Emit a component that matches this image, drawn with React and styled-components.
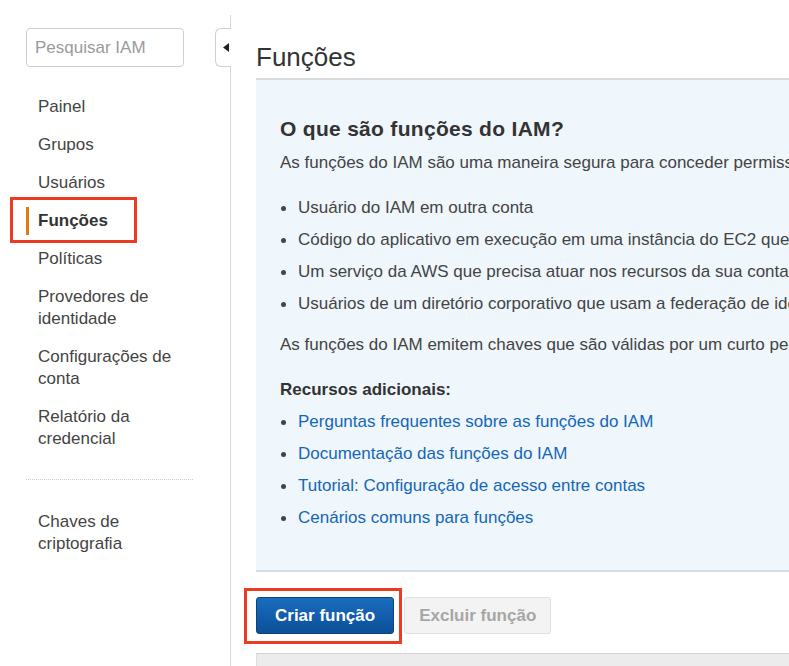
import React from "react";
import styled, { createGlobalStyle } from "styled-components";

const Global = createGlobalStyle`
  html, body { margin: 0; padding: 0; background: #fff; overflow: hidden; }
  body { font-family: "Liberation Sans", Arial, sans-serif; color: #444; }
  * { box-sizing: border-box; }
`;

const Page = styled.div`
  display: flex;
  width: 789px;
  height: 666px;
  overflow: hidden;
`;

const Sidebar = styled.aside`
  position: relative;
  flex: 0 0 231px;
  margin-top: 15px;
  padding: 13px 0 0 26px;
  border-right: 1px solid #d6d6d6;
`;

const Search = styled.input`
  display: block;
  width: 158px;
  height: 39px;
  border: 1px solid #cfcfcf;
  border-radius: 4px;
  padding: 0 8px;
  font-family: inherit;
  font-size: 17px;
  color: #444;
  outline: none;
  &::placeholder { color: #9a9a9a; }
`;

const Toggle = styled.div`
  position: absolute;
  right: -1px;
  top: 13px;
  width: 16px;
  height: 39px;
  background: #fff;
  border: 1px solid #cfcfcf;
  border-right: none;
  border-radius: 6px 0 0 6px;
  display: flex;
  align-items: center;
  justify-content: flex-end;
  padding-right: 2px;
`;

const Nav = styled.nav`
  display: flex;
  flex-direction: column;
  gap: 16px;
  margin-top: ${(p) => p.$top || "0"};
`;

const NavItem = styled.div`
  position: relative;
  max-width: 167px;
  padding-left: 12px;
  font-size: 17px;
  line-height: 22px;
  color: ${(p) => (p.$active ? "#333" : "#444")};
  font-weight: ${(p) => (p.$active ? 700 : 400)};
  &::before {
    content: "";
    display: ${(p) => (p.$active ? "block" : "none")};
    position: absolute;
    left: 0;
    top: -3px;
    bottom: -3px;
    width: 3px;
    background: #e07b10;
  }
`;

const Separator = styled.div`
  width: 167px;
  border-top: 1px dotted #c8c8c8;
  margin: 29px 0 31px;
`;

const Annotation = styled.span`
  position: absolute;
  border: 3px solid #ec3b22;
  pointer-events: none;
`;

const Main = styled.main`
  flex: 0 0 auto;
  width: 640px;
  margin-left: 25px;
  padding-top: 42px;
  display: flex;
  flex-direction: column;
`;

const Title = styled.h1`
  margin: 0 0 6px;
  font-size: 26px;
  line-height: 30px;
  font-weight: 400;
  color: #333;
`;

const InfoBox = styled.section`
  background: #eff6fc;
  border-top: 2px solid #d9dcde;
  border-bottom: 2px solid #d9dcde;
  padding: 37px 0 41px 24px;
  white-space: nowrap;
`;

const Heading = styled.h2`
  margin: 0 0 11px;
  font-size: 21px;
  line-height: 24px;
  letter-spacing: 0.3px;
  font-weight: 700;
  color: #333;
`;

const Para = styled.p`
  margin: 0;
  font-size: 17px;
  line-height: 22px;
  color: #444;
`;

const List = styled.ul`
  list-style: none;
  margin: ${(p) => p.$margin};
  padding: 0;
  display: flex;
  flex-direction: column;
  gap: 10px;
`;

const Item = styled.li`
  position: relative;
  padding-left: 18px;
  font-size: 17px;
  line-height: 22px;
  color: ${(p) => (p.$link ? "#1466b8" : "#444")};
  &::before {
    content: "";
    position: absolute;
    left: 1px;
    top: 9px;
    width: 5px;
    height: 5px;
    border-radius: 50%;
    background: #444;
  }
`;

const SubHeading = styled.h3`
  margin: 23px 0 0;
  font-size: 17px;
  line-height: 22px;
  font-weight: 700;
  color: #333;
`;

const Actions = styled.div`
  display: flex;
  gap: 10px;
  margin-top: 25px;
`;

const ButtonWrap = styled.div`
  position: relative;
`;

const Button = styled.button`
  height: 37px;
  padding: 0 ${(p) => (p.$primary ? "18px" : "14px")};
  border-radius: 3px;
  font-family: inherit;
  font-size: 17px;
  font-weight: 700;
  cursor: pointer;
  color: ${(p) => (p.$primary ? "#fff" : "#a6a6a6")};
  background: ${(p) =>
    p.$primary ? "linear-gradient(#1b6cbf, #0b4f98)" : "#f3f3f3"};
  border: 1px solid ${(p) => (p.$primary ? "#0a447f" : "#e0e0e0")};
`;

const Table = styled.div`
  margin-top: 19px;
  height: 40px;
  background: #ececec;
  border-top: 1px solid #d2d2d2;
  border-left: 1px solid #dedede;
`;

export default function App() {
  const nav = [
    "Painel",
    "Grupos",
    "Usuários",
    "Funções",
    "Políticas",
    "Provedores de identidade",
    "Configurações de conta",
    "Relatório da credencial",
  ];
  return (
    <Page>
      <Global />
      <Sidebar>
        <Search placeholder="Pesquisar IAM" />
        <Toggle>
          <svg width="6" height="9" viewBox="0 0 6 9">
            <path d="M6 0 L0 4.5 L6 9 Z" fill="#222" />
          </svg>
        </Toggle>
        <Nav $top="29px">
          {nav.map((n) => (
            <NavItem key={n} $active={n === "Funções"}>
              {n}
              {n === "Funções" && (
                <Annotation style={{ left: -16, top: -13, width: 127, height: 46 }} />
              )}
            </NavItem>
          ))}
        </Nav>
        <Separator />
        <Nav as="div">
          <NavItem>Chaves de criptografia</NavItem>
        </Nav>
      </Sidebar>
      <Main>
        <Title>Funções</Title>
        <InfoBox>
          <Heading>O que são funções do IAM?</Heading>
          <Para>
            As funções do IAM são uma maneira segura para conceder permissões a entidades em que você confia. Exemplos de entidades:
          </Para>
          <List $margin="23px 0 19px">
            <Item>Usuário do IAM em outra conta</Item>
            <Item>Código do aplicativo em execução em uma instância do EC2 que precisa executar ações em recursos da AWS</Item>
            <Item>Um serviço da AWS que precisa atuar nos recursos da sua conta para fornecer seus recursos</Item>
            <Item>Usuários de um diretório corporativo que usam a federação de identidades com SAML</Item>
          </List>
          <Para>
            As funções do IAM emitem chaves que são válidas por um curto período, o que as torna uma maneira mais segura de conceder acesso.
          </Para>
          <SubHeading>Recursos adicionais:</SubHeading>
          <List $margin="10px 0 0">
            <Item $link>Perguntas frequentes sobre as funções do IAM</Item>
            <Item $link>Documentação das funções do IAM</Item>
            <Item $link>Tutorial: Configuração de acesso entre contas</Item>
            <Item $link>Cenários comuns para funções</Item>
          </List>
        </InfoBox>
        <Actions>
          <ButtonWrap>
            <Button $primary>Criar função</Button>
            <Annotation style={{ left: -12, top: -9, width: 158, height: 56 }} />
          </ButtonWrap>
          <Button>Excluir função</Button>
        </Actions>
        <Table />
      </Main>
    </Page>
  );
}
